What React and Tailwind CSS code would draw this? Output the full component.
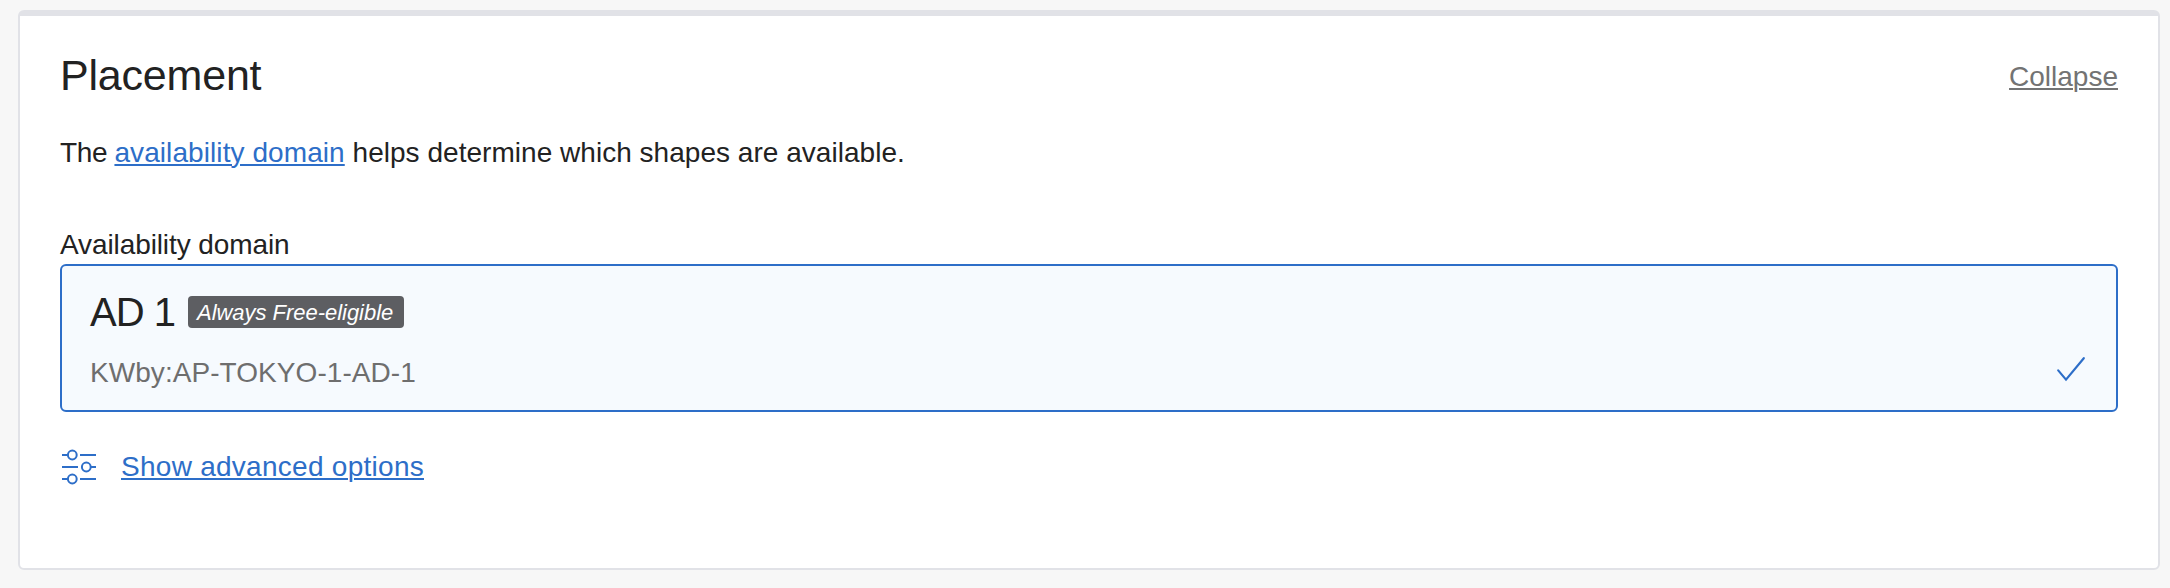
function SlidersIcon() {
  return (
    <svg className="mt-0.5 ml-0.5 h-[36px] w-[36px] shrink-0" viewBox="0 0 36 36" fill="none" stroke="currentColor" strokeWidth="2">
      <path d="M0 6H5M18 6H34M0 18H16M29 18H34M0 30H5M18 30H34" />
      <circle cx="10.3" cy="6" r="4.4" />
      <circle cx="24.3" cy="18" r="4.4" />
      <circle cx="10.3" cy="30" r="4.4" />
    </svg>
  );
}

function CheckIcon() {
  return (
    <svg className="h-[26px] w-[30px] shrink-0" viewBox="0 0 30 26" fill="none" stroke="currentColor" strokeWidth="2.2" strokeLinecap="round">
      <path d="M2.2 14.4L10 23.6L27.8 2.2" />
    </svg>
  );
}

function DomainCard() {
  return (
    <div className="-mt-px flex h-[148px] justify-between rounded-[6px] border-2 border-[#2d6ec8] bg-[#f6fafe] pt-[22px] pr-[30px] pl-7">
      <div>
        <div className="flex items-start">
          <span className="w-[98px] text-[40px] leading-[48px] tracking-[-1px]">AD 1</span>
          <span className="mt-2 h-8 w-[216px] rounded-[4px] bg-[#5d5e62] pl-[9px] text-[22px] leading-[33px] whitespace-nowrap text-white italic tracking-[-0.03px]">
            Always Free-eligible
          </span>
        </div>
        <div className="mt-[17px] text-[28px] leading-10 tracking-[0.06px] text-[#6e6e6e]">KWby:AP-TOKYO-1-AD-1</div>
      </div>
      <div className="mt-[68px] text-[#2d6ec8]">
        <CheckIcon />
      </div>
    </div>
  );
}

export default function App() {
  return (
    <div className="h-[588px] w-[2170px] bg-[#f7f7f7] pt-2.5 pl-[18px] font-['Liberation_Sans',Arial,sans-serif] text-[28px] leading-10 text-[#222222]">
      <section className="h-[560px] w-[2142px] rounded-[6px] border-2 border-t-6 border-[#e1e2e7] bg-white px-10 pt-[29px]">
        <header className="flex items-start justify-between">
          <h2 className="text-[43px] leading-[60px] tracking-[-0.2px]">Placement</h2>
          <a className="mt-3 text-[#737373] underline decoration-2 underline-offset-2">Collapse</a>
        </header>
        <p className="mt-7 tracking-[0.03px]">
          <span className="tracking-[-0.4px]">The </span>
          <a className="tracking-[0.08px] text-[#2d6ec8] underline decoration-2 underline-offset-2">availability domain</a> helps determine which shapes are available.
        </p>
        <div className="mt-[52px] tracking-[-0.1px]">Availability domain</div>
        <DomainCard />
        <div className="mt-[35px] flex items-start text-[#2d6ec8]">
          <SlidersIcon />
          <a className="ml-[23px] tracking-[0.27px] underline decoration-2 underline-offset-2">Show advanced options</a>
        </div>
      </section>
    </div>
  );
}
